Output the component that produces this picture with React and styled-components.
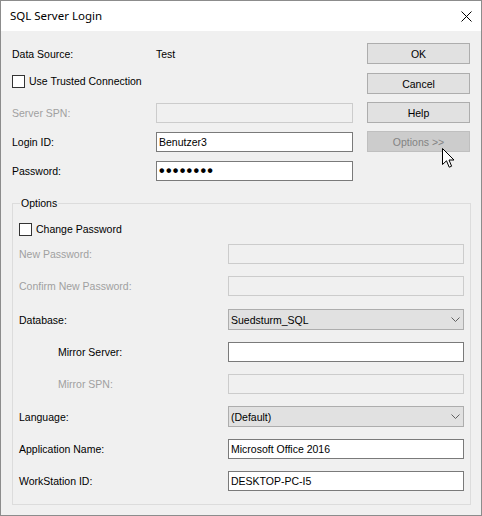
import React from 'react';
import styled, { createGlobalStyle } from 'styled-components';

const ui = `"Liberation Sans", Arial, sans-serif`;

const Global = createGlobalStyle`
  html, body {
    margin: 0;
    padding: 0;
    background: #ffffff;
  }
  * { box-sizing: border-box; }
`

const Window = styled.div`
  position: relative;
  width: 482px;
  height: 516px;
  border: 1px solid #8c8c8c;
  display: flex;
  flex-direction: column;
  font-family: ${ui};
  font-size: 10.5px;
  color: #000;
`
const TitleBar = styled.div`
  height: 30px;
  flex: none;
  background: #ffffff;
  display: flex;
  align-items: center;
  justify-content: space-between;
  padding: 0 9px 0 9px;
`
const Title = styled.span`
  font-family: "Noto Sans", ${ui};
  font-size: 11.5px;
  margin-top: -1px;
`
const Body = styled.div`
  flex: 1;
  background: #f0f0f0;
  padding: 0 10px 0 11px;
`
const Top = styled.div`
  height: 150px;
  display: flex;
  justify-content: space-between;
`
const Form = styled.div`
  width: 341px;
  padding-top: 13px;
  display: flex;
  flex-direction: column;
`
const Row = styled.div`
  display: flex;
  align-items: center;
  flex: none;
  height: ${p => p.$h || 20}px;
  margin-top: ${p => p.$mt || 0}px;
`
const Label = styled.span`
  width: ${p => p.$w}px;
  flex: none;
  padding-left: ${p => p.$indent || 0}px;
  color: ${p => (p.$off ? '#a0a0a0' : '#000')};
  white-space: nowrap;
`
const Field = styled.input`
  width: ${p => p.$w}px;
  height: 20px;
  margin: 0;
  padding: 0 2px;
  border: 1px solid ${p => (p.disabled ? '#cccccc' : '#7a7a7a')};
  background: ${p => (p.disabled ? '#f0f0f0' : '#ffffff')};
  font-family: ${ui};
  font-size: 10.5px;
  color: #000;
  outline: none;
  border-radius: 0;
`
const Dots = styled(Field)`
  font-size: 16px;
  font-weight: bold;
  letter-spacing: 1.3px;
`
const Combo = styled.div`
  width: 236px;
  height: 21px;
  border: 1px solid #adadad;
  background: #e1e1e1;
  display: flex;
  align-items: center;
  justify-content: space-between;
  padding: 0 3px 0 2px;
`
const Check = styled.label`
  display: flex;
  align-items: center;
  gap: 4px;
  white-space: nowrap;
`
const Box = styled.span`
  width: 13px;
  height: 13px;
  flex: none;
  border: 1px solid #333333;
  background: #ffffff;
`
const Buttons = styled.div`
  width: 103px;
  margin-right: 1px;
  padding-top: 12px;
  display: flex;
  flex-direction: column;
`
const Button = styled.button`
  height: 21px;
  margin: ${p => p.$mt || 0}px 0 0 0;
  padding: 0;
  border: 1px solid ${p => (p.disabled ? '#bfbfbf' : '#adadad')};
  background: ${p => (p.disabled ? '#cccccc' : '#e1e1e1')};
  color: ${p => (p.disabled ? '#838383' : '#000')};
  font-family: ${ui};
  font-size: 10.5px;
  border-radius: 0;
`
const Group = styled.div`
  position: relative;
  margin-top: 22px;
  border: 1px solid #dcdcdc;
  padding: 15px 5px 13px 6px;
  display: flex;
  flex-direction: column;
`
const Legend = styled.span`
  position: absolute;
  top: -7px;
  left: 7px;
  padding: 0 1px;
  background: #f0f0f0;
  line-height: 13px;
`
const Cursor = styled.svg`
  position: absolute;
  left: 441px;
  top: 147px;
`

function Chevron() {
  return (
    <svg width="9" height="5" viewBox="0 0 9 5">
      <polyline points="0.5,0.5 4.5,4.5 8.5,0.5" fill="none" stroke="#606060" strokeWidth="1" />
    </svg>
  );
}

function CloseIcon() {
  return (
    <svg width="11" height="11" viewBox="0 0 11 11">
      <path d="M0.5 0.5 L10.5 10.5 M10.5 0.5 L0.5 10.5" stroke="#000" strokeWidth="1" />
    </svg>
  );
}

const G = 209;

export default function App() {
  return (
    <Window>
      <Global />
      <TitleBar>
        <Title>SQL Server Login</Title>
        <CloseIcon />
      </TitleBar>
      <Body>
        <Top>
          <Form>
            <Row>
              <Label $w={144}>Data Source:</Label>
              <span>Test</span>
            </Row>
            <Row $mt={7}>
              <Check><Box />Use Trusted Connection</Check>
            </Row>
            <Row $mt={12}>
              <Label $w={144} $off>Server SPN:</Label>
              <Field $w={197} disabled />
            </Row>
            <Row $mt={9}>
              <Label $w={144}>Login ID:</Label>
              <Field $w={197} defaultValue="Benutzer3" />
            </Row>
            <Row $mt={9}>
              <Label $w={144}>Password:</Label>
              <Dots $w={197} defaultValue="••••••••" />
            </Row>
          </Form>
          <Buttons>
            <Button>OK</Button>
            <Button $mt={9}>Cancel</Button>
            <Button $mt={8}>Help</Button>
            <Button $mt={8} disabled>Options &gt;&gt;</Button>
          </Buttons>
        </Top>

        <Group>
          <Legend>Options</Legend>
          <Row>
            <Check><Box />Change Password</Check>
          </Row>
          <Row $mt={5}>
            <Label $w={G} $off>New Password:</Label>
            <Field $w={236} disabled />
          </Row>
          <Row $mt={12}>
            <Label $w={G} $off>Confirm New Password:</Label>
            <Field $w={236} disabled />
          </Row>
          <Row $mt={13} $h={21}>
            <Label $w={G}>Database:</Label>
            <Combo><span>Suedsturm_SQL</span><Chevron /></Combo>
          </Row>
          <Row $mt={12}>
            <Label $w={G} $indent={39}>Mirror Server:</Label>
            <Field $w={236} />
          </Row>
          <Row $mt={12}>
            <Label $w={G} $indent={39} $off>Mirror SPN:</Label>
            <Field $w={236} disabled />
          </Row>
          <Row $mt={12} $h={21}>
            <Label $w={G}>Language:</Label>
            <Combo><span>(Default)</span><Chevron /></Combo>
          </Row>
          <Row $mt={12}>
            <Label $w={G}>Application Name:</Label>
            <Field $w={236} defaultValue="Microsoft Office 2016" />
          </Row>
          <Row $mt={12}>
            <Label $w={G}>WorkStation ID:</Label>
            <Field $w={236} defaultValue="DESKTOP-PC-I5" />
          </Row>
        </Group>
      </Body>
      <Cursor width="13" height="21" viewBox="0 0 13 21">
        <path d="M0.5 0.5 L0.5 16.5 L4.5 12.8 L7.2 19.2 L9.6 18.2 L7 12 L12 12 Z" fill="#fff" stroke="#000" strokeWidth="1" strokeLinejoin="miter" />
      </Cursor>
    </Window>
  );
}
